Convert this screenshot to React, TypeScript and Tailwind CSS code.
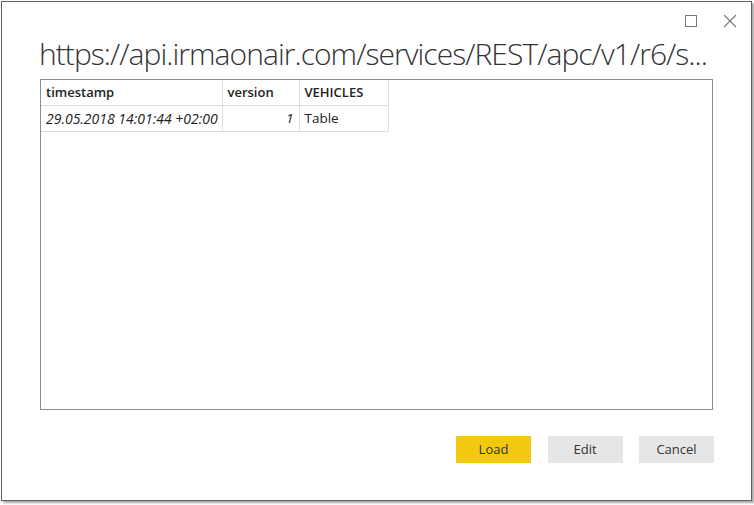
import React from "react";

export default function App() {
  const font = { fontFamily: '"Open Sans", "Noto Sans", sans-serif' };
  return (
    <div className="w-[754px] h-[505px] bg-white overflow-hidden" style={font}>
      <div className="ml-[1px] mt-[1px] w-[751px] h-[500px] border border-[#5f5f5f] bg-white shadow-[2px_2px_2px_rgba(0,0,0,0.35)] flex flex-col">
        <div className="flex justify-end items-center h-[27px] pt-[10px] pr-[14px] gap-[26px]">
          <div className="w-[12px] h-[12px] border border-[#777]" />
          <svg width="14" height="14" viewBox="0 0 14 14">
            <path d="M1 1 L13 13 M13 1 L1 13" stroke="#777" strokeWidth="1.1" />
          </svg>
        </div>
        <div className="pl-[37px] h-[50px] flex items-center">
          <div className="text-[30px] leading-[40px] font-light text-[#333] tracking-[-0.95px] whitespace-nowrap">
            https://api.irmaonair.com/services/REST/apc/v1/r6/s...
          </div>
        </div>
        <div className="ml-[38px] w-[673px] h-[331px] border border-[#8c8c8c]">
          <table className="table-fixed border-collapse w-[347px] text-[12.5px] text-[#222]">
            <colgroup>
              <col className="w-[181px]" />
              <col className="w-[77px]" />
              <col className="w-[89px]" />
            </colgroup>
            <thead>
              <tr className="h-[25px]">
                <th className="text-left font-semibold text-[13px] px-[5px] border-r border-b border-[#dedede]">timestamp</th>
                <th className="text-left font-semibold text-[13px] px-[5px] border-r border-b border-[#dedede]">version</th>
                <th className="text-left font-semibold text-[13px] px-[5px] border-r border-b border-[#dedede]">VEHICLES</th>
              </tr>
            </thead>
            <tbody>
              <tr className="h-[26px]">
                <td className="italic text-[14px] whitespace-nowrap px-[5px] border-r border-b border-[#dedede]">29.05.2018 14:01:44 +02:00</td>
                <td className="italic text-[13.5px] text-right px-[5px] border-r border-b border-[#dedede]">1</td>
                <td className="text-[13.5px] px-[5px] border-r border-b border-[#dedede]">Table</td>
              </tr>
            </tbody>
          </table>
        </div>
        <div className="flex justify-end gap-[16.5px] mt-[26px] pr-[37px] text-[13px] text-[#333]">
          <button className="w-[75px] h-[27px] bg-[#f2c811]">Load</button>
          <button className="w-[75px] h-[27px] bg-[#e6e6e6]">Edit</button>
          <button className="w-[75px] h-[27px] bg-[#e6e6e6]">Cancel</button>
        </div>
      </div>
    </div>
  );
}
